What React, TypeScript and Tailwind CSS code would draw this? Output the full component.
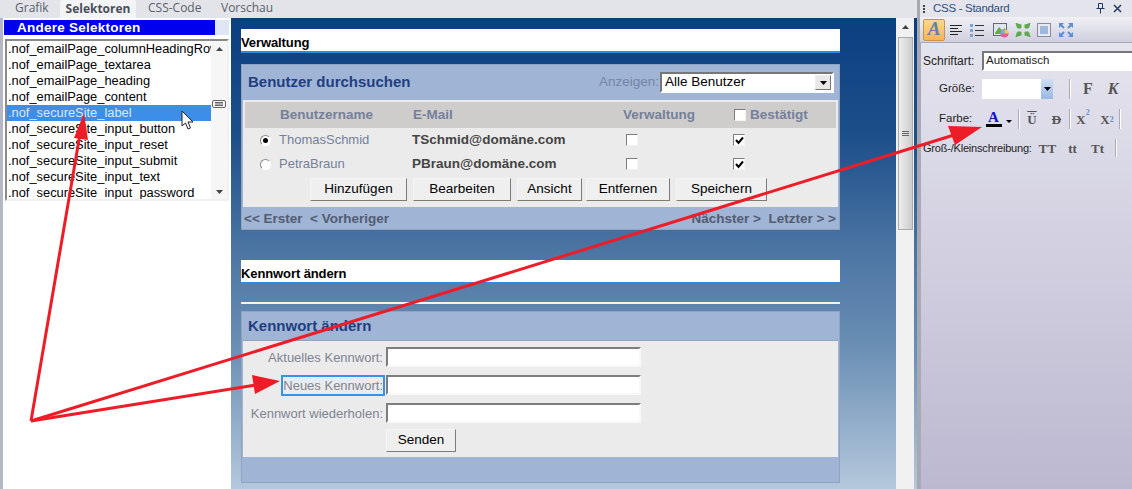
const SELECTORS = [
  '.nof_emailPage_columnHeadingRow',
  '.nof_emailPage_textarea',
  '.nof_emailPage_heading',
  '.nof_emailPage_content',
  '.nof_secureSite_label',
  '.nof_secureSite_input_button',
  '.nof_secureSite_input_reset',
  '.nof_secureSite_input_submit',
  '.nof_secureSite_input_text',
  '.nof_secureSite_input_password',
]

const USERS = [
  { name: 'ThomasSchmid', mail: 'TSchmid@domäne.com', on: true },
  { name: 'PetraBraun', mail: 'PBraun@domäne.com', on: false },
]

const Radio = ({ on }: { on: boolean }) => (
  <span className="flex h-[11px] w-[11px] items-center justify-center rounded-full border border-[#888] border-r-white border-b-white bg-white">
    {on && <span className="h-[5px] w-[5px] rounded-full bg-black" />}
  </span>
)

const Check = ({ on = false }: { on?: boolean }) => (
  <span className="flex h-[12px] w-[12px] shrink-0 items-center justify-center border border-[#7d7d7d] border-r-[#f4f4f4] border-b-[#f4f4f4] bg-white">
    {on && (
      <svg width="9" height="9" viewBox="0 0 9 9" fill="none" stroke="#000" strokeWidth="2">
        <path d="M1 4l2.500 3L8 1.500" />
      </svg>
    )}
  </span>
)

const Btn = ({ label, w }: { label: string; w: string }) => (
  <span className={`flex h-[23px] items-center justify-center border border-[#f4f4f4] border-r-[#7c7c7c] border-b-[#7c7c7c] bg-[#efefef] text-[13.5px] text-black ${w}`}>
    {label}
  </span>
)

const TextBox = () => (
  <span className="block h-[20px] w-[255px] border-2 border-[#f8f8f8] border-t-[#7d7d7d] border-l-[#7d7d7d] bg-white" />
)

const HeadBar = ({ title }: { title: string }) => (
  <div className="flex h-[24px] items-center border-b-2 border-[#2c8ae2] bg-white pt-[5px] text-[13px] font-bold tracking-[-0.1px] text-black">{title}</div>
)

const Sep = ({ h = 'h-[20px]' }: { h?: string }) => <span className={`block w-[2px] shrink-0 border-r border-white bg-[#a9a9b8] ${h}`} />

const Glyph = ({ c, w }: { c: React.ReactNode; w: string }) => (
  <span className={`flex shrink-0 justify-center font-['Liberation_Serif',serif] text-[13px] font-bold leading-none text-[#555] ${w}`}>{c}</span>
)

function Arrows() {
  return (
    <svg className="pointer-events-none absolute left-0 top-0" width="1132" height="489" viewBox="0 0 1132 489">
      <g stroke="#ee1c27" strokeWidth="3" fill="none">
        <path d="M31 421L80 134" />
        <path d="M31 421L954 135" />
        <path d="M31 421L256 385" />
      </g>
      <g fill="#ee1c27">
        <path d="M84 113L74 138L88 140Z" />
        <path d="M982 127L948 126L955 145Z" />
        <path d="M280 381L252 375L255 394Z" />
      </g>
      <path d="M182 111v15l3.500-3 2.500 6 2.500-1-2.500-6h5z" fill="#fff" stroke="#222" strokeWidth="1" />
    </svg>
  )
}

function LeftPanel() {
  return (
    <div className="flex w-[228px] shrink-0 flex-col bg-white pl-[1px] pr-[2px] pt-[2px]">
      <div className="flex h-[15px] w-[225px] items-center justify-between bg-[#0000ee] pl-[13px] text-[13.5px] font-bold leading-none tracking-[0.25px] text-white">
        <span>Andere Selektoren</span>
        <span className="h-full w-[14px] bg-[#dfe6f5]" />
      </div>
      <div className="ml-[1px] mt-[4px] flex h-[162px] w-[224px] border-2 border-[#f1f1f1] border-t-[#8a8a8a] border-l-[#8a8a8a]">
        <ul className="w-[204px] shrink-0 overflow-hidden text-[12.85px] leading-[16px] text-black">
          {SELECTORS.map((s, i) => (
            <li key={s} className={`whitespace-nowrap pl-[1px] ${i === 4 ? 'bg-[#3c8ee8] text-[#dce8f8]' : ''}`}>
              {s}
            </li>
          ))}
        </ul>
        <div className="flex flex-1 flex-col items-center bg-[#f6f6f6] pb-[5px] pt-[6px] text-[#444]">
          <svg width="7" height="4" viewBox="0 0 7 4" fill="currentColor"><path d="M3.500 0L7 4H0z" /></svg>
          <svg className="mt-[49px]" width="14" height="8" viewBox="0 0 14 8" fill="none" stroke="#666"><rect x=".5" y=".5" width="13" height="7" rx="1.500" /><path d="M3 2.500h8M3 4h8M3 5.500h8" /></svg>
          <svg className="mt-auto" width="7" height="4" viewBox="0 0 7 4" fill="currentColor"><path d="M0 0h7L3.500 4z" /></svg>
        </div>
      </div>
    </div>
  )
}

function UsersPanel() {
  return (
    <div className="mt-[11px] flex h-[166px] flex-col border border-[#8fa3c2] bg-[#a0b4d6]">
      <div className="flex h-[35px] shrink-0 items-center pl-[6px] pr-[5px]">
        <span className="flex-1 text-[15px] font-bold text-[#1f3f80]">Benutzer durchsuchen</span>
        <span className="mr-[1px] text-[13.5px] text-[#7485a6]">Anzeigen:</span>
        <span className="flex h-[21px] w-[174px] items-center justify-between border-2 border-white border-t-[#777] border-l-[#777] bg-white pl-[3px] pr-[1px] text-[13.5px] text-black">
          Alle Benutzer
          <span className="flex h-[15px] w-[16px] items-center justify-center border border-[#eee] border-r-[#777] border-b-[#777] bg-[#e8e8e8]">
            <svg width="7" height="4" viewBox="0 0 7 4"><path d="M0 0h7L3.500 4z" /></svg>
          </span>
        </span>
      </div>
      <div className="ml-[1px] flex h-[107px] w-[595px] flex-col border-2 border-[#ebebeb] bg-[#ebebeb]">
        <div className="grid h-[26px] shrink-0 grid-cols-[35px_133px_210px_111px_1fr] items-center bg-[#cfcdcb] text-[13.5px] font-bold text-[#74809c]">
          <span />
          <span>Benutzername</span>
          <span>E-Mail</span>
          <span>Verwaltung</span>
          <span className="flex items-center gap-[4px]"><Check />Bestätigt</span>
        </div>
        {USERS.map((u) => (
          <div key={u.name} className="grid h-[24px] shrink-0 grid-cols-[35px_133px_210px_111px_1fr] items-center">
            <span className="pl-[15px]"><Radio on={u.on} /></span>
            <span className="-ml-[1px] text-[13px] text-[#74809c]">{u.name}</span>
            <span className="-ml-[1px] text-[13.5px] font-bold text-[#444]">{u.mail}</span>
            <span className="pl-[3px]"><Check /></span>
            <span className="-ml-[1px]"><Check on /></span>
          </div>
        ))}
        <div className="mt-[2px] flex gap-[6px] pl-[65px]">
          <Btn label="Hinzufügen" w="w-[97px]" />
          <Btn label="Bearbeiten" w="w-[98px]" />
          <Btn label="Ansicht" w="w-[65px]" />
          <Btn label="Entfernen" w="-ml-[2px] w-[84px]" />
          <Btn label="Speichern" w="w-[91px]" />
        </div>
      </div>
      <div className="flex flex-1 items-center justify-between whitespace-pre pl-[2px] pr-[3px] pt-[2px] text-[13.5px] font-bold text-[#525d72]">
        <span>{'<< Erster  < Vorheriger'}</span>
        <span>{'Nächster >  Letzter > >'}</span>
      </div>
    </div>
  )
}

function PasswordPanel() {
  const fields = ['Aktuelles Kennwort:', 'Neues Kennwort:', 'Kennwort wiederholen:']
  return (
    <div className="mt-[7px] flex h-[172px] flex-col border border-[#8fa3c2] bg-[#a0b4d6]">
      <div className="flex h-[28px] shrink-0 items-center pl-[6px] text-[15px] font-bold text-[#1f3f80]">Kennwort ändern</div>
      <div className="ml-[1px] flex h-[117px] w-[595px] flex-col border-t border-[#8fa3c2] bg-[#ebebeb] pt-[6px]">
        {fields.map((f, i) => (
          <div key={f} className="mb-[8px] flex h-[20px] items-center">
            <span className="flex w-[143px] justify-end pr-[3px]">
              <span className={`whitespace-nowrap text-[13px] leading-[17px] text-[#7f8392] ${i === 1 ? 'outline-2 outline-[#3a92e2]' : ''}`}>{f}</span>
            </span>
            <TextBox />
          </div>
        ))}
        <span className="-mt-[2px] ml-[143px]"><Btn label="Senden" w="w-[70px]" /></span>
      </div>
    </div>
  )
}

function Canvas() {
  return (
    <div className="flex-1 bg-[linear-gradient(180deg,#0a3f80_0%,#1d4f8a_25%,#4d76a4_50%,#6a8fb4_70%,#b5c8dc_100%)] pl-[10px] pr-[77px] pt-[11px]">
      <HeadBar title="Verwaltung" />
      <UsersPanel />
      <div className="mt-[30px]"><HeadBar title="Kennwort ändern" /></div>
      <div className="mt-[18px] h-[2px] bg-[#f2f4f6]" />
      <PasswordPanel />
    </div>
  )
}

function Toolbar() {
  return (
    <div className="flex h-[25px] items-center gap-[4px] bg-[linear-gradient(180deg,#f0f0f5,#cfcfde)] pl-[3px]">
      <span className="flex h-[22px] w-[22px] items-center justify-center rounded-[2px] border border-[#c4964e] bg-[linear-gradient(180deg,#fbd98d,#f5b552)] font-['Liberation_Serif',serif] text-[19px] font-bold italic text-[#5f7fb5]">A</span>
      <svg width="14" height="14" viewBox="0 0 14 14" stroke="#222"><path d="M1 2.500h12M1 5.500h8M1 8.500h12M1 11.500h8" /></svg>
      <svg className="ml-[3px]" width="14" height="14" viewBox="0 0 14 14"><path d="M5 2.500h9M5 7.500h9M5 12.500h9" stroke="#333" /><path d="M0 1h3v3H0zM0 6h3v3H0zM0 11h3v3H0z" fill="#7ba4d6" /></svg>
      <svg className="ml-[5px]" width="16" height="16" viewBox="0 0 16 16"><rect x=".5" y="1.500" width="13" height="12" fill="#dfe6ee" stroke="#667" /><path d="M2 11l4-6 3 3 3-2v6H2z" fill="#6aa84f" /><circle cx="11.500" cy="11.500" r="4" fill="#e85aa0" /><path d="M11.500 11.500V7.500a4 4 0 0 1 4 4z" fill="#f6d24a" /><path d="M11.500 11.500h-4a4 4 0 0 1 4-4z" fill="#6bb6e8" /></svg>
      <svg className="ml-[2px]" width="16" height="16" viewBox="0 0 16 16" fill="#5ea94c"><path d="M1 1l5 5V2.500M1 1l5 5H2.500zM15 1l-5 5V2.500M15 1l-5 5h3.500zM1 15l5-5v3.500M1 15l5-5H2.500zM15 15l-5-5v3.500M15 15l-5-5h3.500z" stroke="#5ea94c" /></svg>
      <svg className="ml-[2px]" width="14" height="14" viewBox="0 0 14 14"><rect x=".5" y=".5" width="13" height="13" fill="#e9e9f2" stroke="#8a8aa0" /><rect x="3" y="3" width="8" height="8" fill="#9cb8dc" /></svg>
      <svg className="ml-[3px]" width="16" height="16" viewBox="0 0 16 16" fill="#5b8fd0"><path d="M6 1H1v5zM10 1h5v5zM6 15H1v-5zM10 15h5v-5z" /><path d="M3 3l3 3M13 3l-3 3M3 13l3-3M13 13l-3-3" stroke="#5b8fd0" strokeWidth="2" /></svg>
    </div>
  )
}

function CssPanel() {
  return (
    <div className="flex w-[212px] shrink-0 flex-col bg-[#dcdce6]">
      <div className="flex h-[17px] items-center justify-between bg-[#e4e4ec] pl-[3px] pr-[10px] text-[11.5px] tracking-[-0.3px] text-[#2c4f80]">
        <span className="flex items-center gap-[8px]">
          <span className="flex flex-col gap-[1px]">
            <span className="h-[2px] w-[2px] bg-[#444]" /><span className="h-[2px] w-[2px] bg-[#444]" /><span className="h-[2px] w-[2px] bg-[#444]" />
          </span>
          CSS - Standard
        </span>
        <span className="flex items-center gap-[8px]">
          <svg width="9" height="11" viewBox="0 0 9 11" fill="none" stroke="#1f3a60"><path d="M2.500 .5h4v5h-4zM.5 5.500h8M4.500 6v4.500" /></svg>
          <svg width="9" height="9" viewBox="0 0 9 9" stroke="#1f3a60" strokeWidth="1.500"><path d="M1 1l7 7M8 1l-7 7" /></svg>
        </span>
      </div>
      <Toolbar />
      <div className="flex flex-1 flex-col border-l border-t border-[#a9a9bb] bg-[linear-gradient(180deg,#e4e4ee,#bcb8d0)] text-[11.5px] text-[#222]">
        <div className="mt-[8px] flex h-[20px] items-center pl-[2px]">
          <span className="w-[59px] text-[12px]">Schriftart:</span>
          <span className="flex h-[20px] flex-1 items-center border-2 border-[#777] border-r-0 border-b-white bg-white pl-[2px]">Automatisch</span>
        </div>
        <div className="mt-[8px] flex h-[20px] items-center pl-[18px]">
          <span className="w-[43px]">Größe:</span>
          <span className="flex h-[20px] w-[71px] justify-end bg-white">
            <span className="flex w-[12px] items-center justify-center bg-[linear-gradient(180deg,#cfe0f5,#98b8e4)]">
              <svg width="7" height="4" viewBox="0 0 7 4"><path d="M0 0h7L3.500 4z" /></svg>
            </span>
          </span>
          <span className="ml-[16px]"><Sep /></span>
          <Glyph c={<span className="text-[16px]">F</span>} w="w-[34px]" />
          <Glyph c={<span className="text-[16px] italic">K</span>} w="w-[16px]" />
        </div>
        <div className="mt-[9px] flex h-[22px] items-center pl-[18px]">
          <span className="w-[46px]">Farbe:</span>
          <span className="flex w-[17px] flex-col items-center font-['Liberation_Serif',serif] text-[15px] font-bold leading-[13px] text-[#1414c8]">
            A<span className="h-[3px] w-[16px] bg-black" />
          </span>
          <svg className="ml-[4px] mt-[4px]" width="6" height="3" viewBox="0 0 6 3"><path d="M0 0h6L3 3z" /></svg>
          <span className="ml-[6px]"><Sep /></span>
          <Glyph c={<span className="overline">Ü</span>} w="w-[24px]" />
          <Glyph c={<span className="line-through">D</span>} w="w-[25px]" />
          <Sep />
          <Glyph c={<>X<span className="relative -top-[4px] text-[8px] text-[#6a8fc8]">2</span></>} w="w-[24px]" />
          <Glyph c={<>X<span className="relative top-[3px] text-[8px] text-[#6a8fc8]">2</span></>} w="w-[24px]" />
          <Sep />
        </div>
        <div className="mt-[7px] flex h-[22px] items-center pl-[2px]">
          <span className="w-[112px] whitespace-nowrap text-[11px] tracking-[-0.2px]">Groß-/Kleinschreibung:</span>
          <Glyph c="TT" w="w-[25px]" />
          <Glyph c="tt" w="w-[25px]" />
          <Glyph c="Tt" w="w-[25px]" />
          <span className="ml-[5px]"><Sep h="h-[18px]" /></span>
        </div>
      </div>
    </div>
  )
}

export default function App() {
  return (
    <div className="relative flex h-[489px] w-[1132px] overflow-hidden bg-[#a8a8b0] font-['Liberation_Sans',sans-serif]">
      <div className="flex w-[917px] shrink-0 flex-col bg-[#b4b8c4]">
        <div className="flex h-[18px] shrink-0 items-end bg-[#e2e4ea] pl-[15px] font-['Open_Sans',sans-serif] text-[12px] text-[#5a5f68]">
          <span className="w-[45px] pb-[1px]">Grafik</span>
          <span className="flex h-[18px] w-[76px] items-center justify-center rounded-t-[2px] bg-[#f3f4f6] font-bold text-[#4a4f58]">Selektoren</span>
          <span className="ml-[12px] w-[73px] pb-[1px]">CSS-Code</span>
          <span className="pb-[1px]">Vorschau</span>
        </div>
        <div className="flex min-h-0 flex-1 pl-[3px]">
          <LeftPanel />
          <Canvas />
        </div>
      </div>
      <span className="w-[3px] shrink-0" />
      <CssPanel />
      <div className="absolute left-[896px] top-[18px] flex h-[471px] w-[18px] flex-col items-center bg-[#f1f1f1] pt-[7px]">
        <svg width="7" height="4" viewBox="0 0 7 4" fill="#444"><path d="M3.500 0L7 4H0z" /></svg>
        <span className="mt-[8px] flex h-[193px] w-[15px] items-center justify-center border border-[#aaa] bg-[linear-gradient(90deg,#eee,#ccc)]">
          <svg width="7" height="7" viewBox="0 0 7 7" stroke="#666"><path d="M0 1.500h7M0 3.500h7M0 5.500h7" /></svg>
        </span>
      </div>
      <Arrows />
    </div>
  )
}
